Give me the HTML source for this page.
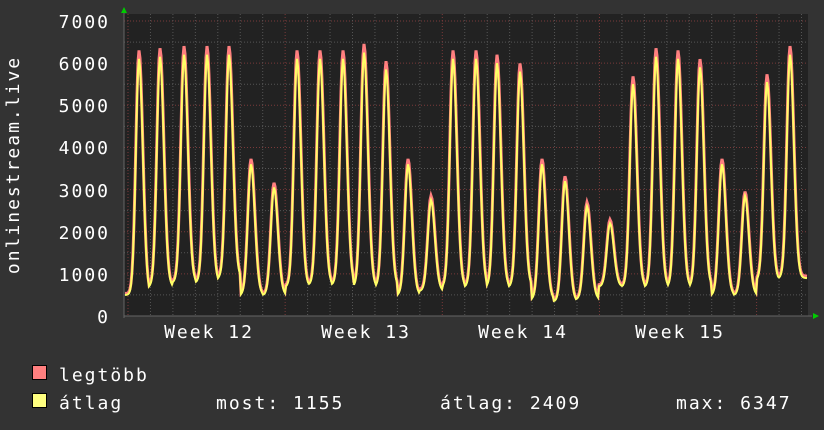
<!DOCTYPE html>
<html><head><meta charset="utf-8"><style>
body{margin:0;background:#333;width:824px;height:430px;overflow:hidden;font-family:"DejaVu Sans Mono","Liberation Mono",monospace;}
svg{display:block}
text{font-family:"DejaVu Sans Mono","Liberation Mono",monospace;fill:#fff;font-size:18px;letter-spacing:2px}
</style></head><body>
<svg id="g" width="824" height="430" xmlns="http://www.w3.org/2000/svg">
<rect width="824" height="430" fill="#333"/>
<rect x="124" y="14" width="684" height="302" fill="#222"/>
<g id="grid"></g>
<polyline id="mx" fill="none" stroke="#ff7f7f" stroke-width="3"/>
<polyline id="av" fill="none" stroke="#ffff66" stroke-width="2"/>
<line x1="124" y1="316" x2="812" y2="316" stroke="#666"/>
<line x1="124" y1="12" x2="124" y2="318" stroke="#666"/>
<polygon points="121,13 127,13 124,7" fill="#0c0"/>
<polygon points="813,313 813,319 819,316" fill="#0c0"/>
<g text-anchor="end">
<text x="110" y="28">7000</text><text x="110" y="70">6000</text><text x="110" y="112">5000</text><text x="110" y="154">4000</text><text x="110" y="197">3000</text><text x="110" y="239">2000</text><text x="110" y="281">1000</text><text x="110" y="323">0</text>
</g>
<text transform="translate(19,165) rotate(-90)" text-anchor="middle">onlinestream.live</text>
<g text-anchor="middle"><text x="209" y="338">Week 12</text><text x="366" y="338">Week 13</text><text x="523" y="338">Week 14</text><text x="680" y="338">Week 15</text></g>
<rect x="32.5" y="365.5" width="14" height="14" fill="#ff7f7f" stroke="#000"/>
<rect x="32.5" y="393.5" width="14" height="14" fill="#ffff7f" stroke="#000"/>
<text x="59" y="381">legtöbb</text>
<text x="59" y="409">átlag</text>
<text x="216" y="409">most: 1155</text>
<text x="440" y="409">átlag: 2409</text>
<text x="676" y="409">max: 6347</text>
</svg>
<script>
var ns="http://www.w3.org/2000/svg",G=document.getElementById('grid');
function ln(x1,y1,x2,y2,c){var l=document.createElementNS(ns,'line');l.setAttribute('x1',x1);l.setAttribute('y1',y1);l.setAttribute('x2',x2);l.setAttribute('y2',y2);l.setAttribute('stroke',c);l.setAttribute('stroke-dasharray','1,2');G.appendChild(l);}
for(var v=0;v<=7000;v+=500){var y=316-v*0.04214;ln(124,y,808,y,v%1000==0?'#7a3a3a':'#555');}
for(var x=128;x<808;x+=22.45){var wk=Math.abs(((x-128)/157.15)-Math.round((x-128)/157.15))<0.05;ln(x,14,x,316,wk?'#7a3a3a':'#555');}
var px=[139,160,184,207,229,251,274,297,320,343,364,386,408,431,453,476,497,520,542,565,587,610,633,656,678,700,722,745,767,790];
var hi=[6100,6150,6200,6200,6200,3600,3050,6100,6100,6100,6250,5850,3600,2750,6100,6100,6000,5800,3600,3200,2600,2200,5500,6150,6100,5900,3600,2850,5550,6200];
var lo=[500,700,800,800,900,500,500,700,750,750,700,700,500,600,700,700,700,700,400,350,400,700,700,700,700,700,500,500,850,900];
function val(x){var b=1e9,i0=0;for(var i=0;i<px.length;i++){var d=Math.abs(x-px[i]);if(d<b){b=d;i0=i;}}var d=x-px[i0];var l=lo[i0];var s=d<0?4.5:5.5;return l+(hi[i0]-l)*Math.exp(-(d/s)*(d/s));}
var a=[],m=[];
for(var x=125;x<=807;x+=1){var v=val(x);a.push(x+','+(316-v*0.04214).toFixed(1));var w=v*1.03+20;m.push(x+','+(316-w*0.04214).toFixed(1));}
document.getElementById('av').setAttribute('points',a.join(' '));
document.getElementById('mx').setAttribute('points',m.join(' '));
</script>
</body></html>
